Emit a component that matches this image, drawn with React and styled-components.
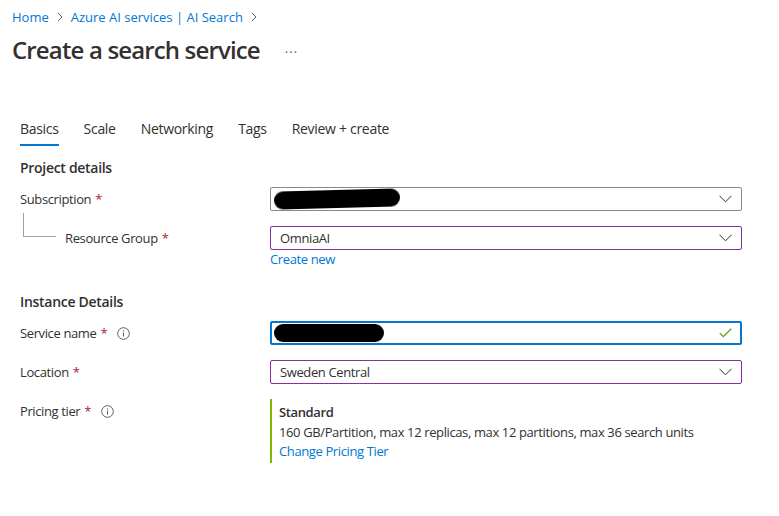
import React from "react";
import styled, { createGlobalStyle } from "styled-components";

const GlobalStyle = createGlobalStyle`
  body {
    margin: 0;
    background: #ffffff;
    font-family: "Segoe UI", "Open Sans", sans-serif;
    font-size: 13px;
    letter-spacing: -0.38px;
    color: #323130;
  }
`;

const Page = styled.div`
  width: 779px;
  height: 516px;
  background: #ffffff;
  overflow: hidden;
`;

const Header = styled.div`
  padding: 8px 12px 0;
`;

const Breadcrumb = styled.nav`
  display: flex;
  align-items: center;
  gap: 7px;
  height: 18px;
  line-height: 18px;
  letter-spacing: 0;
`;

const Crumb = styled.a`
  color: #0078d4;
  text-decoration: none;
`;

const Chevron = styled.svg`
  width: 8px;
  height: 10px;
  stroke: #605e5c;
  fill: none;
`;

const TitleRow = styled.div`
  display: flex;
  align-items: center;
  gap: 25px;
  margin-top: 11px;
  height: 26px;
`;

const Title = styled.h1`
  margin: 0;
  font-size: 24px;
  font-weight: 600;
  letter-spacing: -0.85px;
  color: #323130;
  line-height: 26px;
`;

const More = styled.span`
  color: #605e5c;
  font-size: 13px;
  letter-spacing: 1px;
  line-height: 10px;
  margin-top: -4px;
`;

const Content = styled.div`
  padding: 0 20px;
  margin-top: 56px;
`;

const Tabs = styled.div`
  display: flex;
  gap: 25px;
  height: 26px;
`;

const Tab = styled.div`
  position: relative;
  font-size: 14px;
  letter-spacing: -0.3px;
  line-height: 20px;
  color: #323130;
  ${({ $active }) =>
    $active &&
    `
    &::after {
      content: "";
      position: absolute;
      left: 0;
      right: 0;
      bottom: -1px;
      height: 2px;
      background: #0078d4;
    }
  `}
`;

const SectionTitle = styled.h2`
  margin: ${({ $top }) => $top}px 0 0;
  font-size: 14px;
  font-weight: 600;
  letter-spacing: -0.3px;
  line-height: 20px;
  color: #323130;
`;

const Row = styled.div`
  display: grid;
  grid-template-columns: 250px 472px;
  align-items: start;
  margin-top: ${({ $top }) => $top}px;
`;

const Label = styled.div`
  display: flex;
  align-items: center;
  gap: 4px;
  height: 24px;
  padding-left: ${({ $indent }) => ($indent ? 45 : 0)}px;
  position: relative;
`;

const Star = styled.span`
  color: #a4262c;
`;

const InfoIcon = styled.svg`
  width: 13px;
  height: 13px;
  margin-left: 6px;
`;

const TreeLine = styled.span`
  position: absolute;
  left: 3px;
  top: -13px;
  width: 32px;
  height: 23px;
  border-left: 1px solid #a19f9d;
  border-bottom: 1px solid #a19f9d;
`;

const Field = styled.div`
  display: flex;
  align-items: center;
  box-sizing: border-box;
  height: 24px;
  padding: 0 ${({ $focus }) => ($focus ? 8 : 9)}px;
  border: ${({ $focus }) => ($focus ? 2 : 1)}px solid
    ${({ $tone }) =>
      $tone === "purple" ? "#8a2da5" : $tone === "blue" ? "#0078d4" : "#8a8886"};
  border-radius: 2px;
  background: #ffffff;
`;

const Value = styled.span`
  flex: 1;
  color: #323130;
`;

const Redacted = styled.span`
  display: block;
  width: ${({ $w }) => $w}px;
  height: 18px;
  margin-left: -6px;
  background: #000000;
  border-radius: 9px;
  filter: blur(0.6px);
  transform: rotate(${({ $r }) => $r}deg);
`;

const LinkText = styled.a`
  display: block;
  color: #0078d4;
  text-decoration: none;
  line-height: 18px;
`;

const Tier = styled.div`
  border-left: 2px solid #7fba00;
  padding: 3px 0 3px 7px;
  line-height: 20px;
`;

const TierName = styled.div`
  font-weight: 600;
  color: #323130;
`;

const ChevronDown = () => (
  <svg width="13" height="8" viewBox="0 0 13 8" fill="none" stroke="#323130" strokeWidth="1">
    <path d="M0.5 0.8 L6.5 6.8 L12.5 0.8" />
  </svg>
);

const Check = () => (
  <svg width="13" height="10" viewBox="0 0 13 10" fill="none" stroke="#57a300" strokeWidth="1.2">
    <path d="M0.8 5.2 L4.3 8.7 L12.3 0.8" />
  </svg>
);

const Info = () => (
  <InfoIcon viewBox="0 0 13 13" fill="none">
    <circle cx="6.5" cy="6.5" r="5.8" stroke="#605e5c" strokeWidth="1" />
    <path d="M6.5 5.6 V9.6" stroke="#605e5c" strokeWidth="1" />
    <circle cx="6.5" cy="3.9" r="0.6" fill="#605e5c" />
  </InfoIcon>
);

const Sep = () => (
  <Chevron viewBox="0 0 8 10">
    <path d="M2 1 L6 5 L2 9" />
  </Chevron>
);

export default function App() {
  return (
    <Page>
      <GlobalStyle />
      <Header>
        <Breadcrumb>
          <Crumb>Home</Crumb>
          <Sep />
          <Crumb>Azure AI services | AI Search</Crumb>
          <Sep />
        </Breadcrumb>
        <TitleRow>
          <Title>Create a search service</Title>
          <More>...</More>
        </TitleRow>
      </Header>

      <Content>
        <Tabs>
          <Tab $active>Basics</Tab>
          <Tab>Scale</Tab>
          <Tab>Networking</Tab>
          <Tab>Tags</Tab>
          <Tab>Review + create</Tab>
        </Tabs>

        <SectionTitle $top={13}>Project details</SectionTitle>

        <Row $top={9}>
          <Label>
            Subscription <Star>*</Star>
          </Label>
          <Field>
            <Value>
              <Redacted $w={126} $r={-1.5} />
            </Value>
            <ChevronDown />
          </Field>
        </Row>

        <Row $top={15}>
          <Label $indent>
            <TreeLine />
            Resource Group <Star>*</Star>
          </Label>
          <div>
            <Field $tone="purple">
              <Value>OmniaAI</Value>
              <ChevronDown />
            </Field>
            <LinkText>Create new</LinkText>
          </div>
        </Row>

        <SectionTitle $top={24}>Instance Details</SectionTitle>

        <Row $top={9}>
          <Label>
            Service name <Star>*</Star>
            <Info />
          </Label>
          <Field $tone="blue" $focus>
            <Value>
              <Redacted $w={110} $r={0} />
            </Value>
            <Check />
          </Field>
        </Row>

        <Row $top={15}>
          <Label>
            Location <Star>*</Star>
          </Label>
          <Field $tone="purple">
            <Value>Sweden Central</Value>
            <ChevronDown />
          </Field>
        </Row>

        <Row $top={15}>
          <Label>
            Pricing tier <Star>*</Star>
            <Info />
          </Label>
          <Tier>
            <TierName>Standard</TierName>
            <div>160 GB/Partition, max 12 replicas, max 12 partitions, max 36 search units</div>
            <LinkText>Change Pricing Tier</LinkText>
          </Tier>
        </Row>
      </Content>
    </Page>
  );
}
